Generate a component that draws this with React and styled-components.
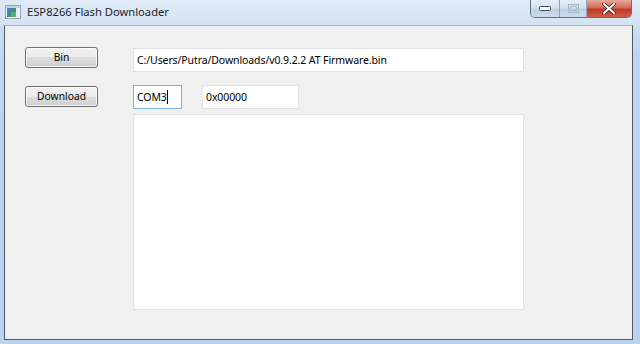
import React from "react";
import styled, { createGlobalStyle } from "styled-components";

const Global = createGlobalStyle`
  html, body { margin: 0; padding: 0; }
  body {
    width: 640px; height: 344px; overflow: hidden;
    font-family: "Noto Sans", "Open Sans", sans-serif;
  }
`;

const Frame = styled.div`
  width: 640px;
  height: 344px;
  box-sizing: border-box;
  display: flex;
  flex-direction: column;
  padding: 0 7px 4px 4px;
  background: linear-gradient(180deg, #dce9f6 0px, #cfe0f2 20px, #bcd6f1 60px, #b9d4f0 100%);
`;

const TitleBar = styled.div`
  height: 25px;
  flex: none;
  display: flex;
  align-items: flex-start;
  margin-left: -4px;
  margin-right: -7px;
  padding-left: 5px;
  background: linear-gradient(180deg, #dfeaf7 0%, #d3e3f4 100%);
`;

const AppIcon = styled.svg`
  width: 16px;
  height: 16px;
  margin-top: 4px;
  flex: none;
`;

const Title = styled.div`
  margin-left: 6px;
  margin-top: 4px;
  font-size: 11.2px;
  color: #1e1e1e;
  flex: 1;
`;

const Controls = styled.div`
  display: flex;
  height: 17px;
  margin-right: 8px;
  border: 1px solid #5f6f84;
  border-top: none;
  border-radius: 0 0 5px 5px;
  overflow: hidden;
`;

const CtlButton = styled.div`
  width: ${(p) => p.$w}px;
  height: 17px;
  display: flex;
  align-items: center;
  justify-content: center;
  box-sizing: border-box;
  border-left: ${(p) => (p.$first ? "none" : "1px solid #8da2bd")};
  background: ${(p) =>
    p.$close
      ? "linear-gradient(180deg, #e9a99b 0%, #d46a57 45%, #c0392b 55%, #cf5b3f 100%)"
      : "linear-gradient(180deg, #e7eef7 0%, #d5e1ee 45%, #bfd0e4 55%, #cbdcee 100%)"};
`;

const Client = styled.div`
  flex: 1;
  background: #f0f0f0;
  border: 1px solid #4e5a68;
  border-top-color: #a4b2c2;
  display: flex;
  padding: 21px 0 0 20px;
  gap: 35px;
  box-sizing: border-box;
`;

const LeftCol = styled.div`
  display: flex;
  flex-direction: column;
  gap: 18px;
  width: 73px;
`;

const Button = styled.div`
  height: 21px;
  box-sizing: border-box;
  border: 1px solid #707070;
  border-radius: 3px;
  background: linear-gradient(180deg, #f2f2f2 0%, #ebebeb 50%, #dddddd 50%, #cfcfcf 100%);
  box-shadow: inset 0 0 0 1px rgba(255, 255, 255, 0.8);
  display: flex;
  align-items: center;
  justify-content: center;
  font-size: 10.3px;
  color: #000;
  padding-bottom: 1px;
`;

const RightCol = styled.div`
  display: flex;
  flex-direction: column;
  width: 391px;
  padding-top: 1px;
`;

const Row = styled.div`
  display: flex;
  gap: 20px;
  margin-top: ${(p) => p.$mt || 0}px;
`;

const Field = styled.div`
  width: ${(p) => p.$w}px;
  height: 24px;
  box-sizing: border-box;
  background: #fff;
  border: 1px solid ${(p) => (p.$focus ? "#7ab4e8" : "#e1e3e6")};
  display: flex;
  align-items: center;
  padding: 0 0 1px 3px;
  font-size: 10.5px;
  letter-spacing: -0.1px;
  color: #000;
  white-space: nowrap;
`;

const Caret = styled.span`
  display: inline-block;
  width: 1px;
  height: 14px;
  background: #000;
`;

const Log = styled.div`
  margin-top: 5px;
  height: 196px;
  box-sizing: border-box;
  background: #fff;
  border: 1px solid #e1e3e6;
`;

export default function App() {
  return (
    <>
      <Global />
      <Frame>
        <TitleBar>
          <AppIcon viewBox="0 0 16 16">
            <rect x="0.5" y="1.5" width="15" height="13" fill="#f4f6f8" stroke="#9aa6b2" />
            <rect x="2" y="4" width="9" height="9" fill="#3f8f7a" />
            <rect x="2" y="4" width="5" height="5" fill="#4a7fc0" />
            <rect x="6" y="8" width="5" height="5" fill="#56b06a" />
            <rect x="11" y="4" width="3" height="9" fill="#e9eef2" />
            <rect x="1" y="2" width="14" height="2" fill="#c9d3dd" />
          </AppIcon>
          <Title>ESP8266 Flash Downloader</Title>
          <Controls>
            <CtlButton $w={28} $first>
              <svg width="12" height="5" viewBox="0 0 12 5">
                <rect x="0.5" y="0.5" width="11" height="4" fill="#fff" stroke="#3b4a5e" rx="1" />
              </svg>
            </CtlButton>
            <CtlButton $w={27}>
              <svg width="11" height="9" viewBox="0 0 11 9">
                <rect x="0.5" y="0.5" width="10" height="8" fill="none" stroke="#a9b9cc" />
                <rect x="2.5" y="2.5" width="6" height="4" fill="none" stroke="#a9b9cc" />
              </svg>
            </CtlButton>
            <CtlButton $w={45} $close>
              <svg width="14" height="11" viewBox="0 0 14 11">
                <path d="M2 1 L12 10 M12 1 L2 10" stroke="#3a2420" strokeWidth="3.6" strokeLinecap="round" />
                <path d="M2 1 L12 10 M12 1 L2 10" stroke="#fff" strokeWidth="2" strokeLinecap="round" />
              </svg>
            </CtlButton>
          </Controls>
        </TitleBar>
        <Client>
          <LeftCol>
            <Button>Bin</Button>
            <Button>Download</Button>
          </LeftCol>
          <RightCol>
            <Field $w={391}>C:/Users/Putra/Downloads/v0.9.2.2 AT Firmware.bin</Field>
            <Row $mt={13}>
              <Field $w={49} $focus>
                COM3<Caret />
              </Field>
              <Field $w={97}>0x00000</Field>
            </Row>
            <Log />
          </RightCol>
        </Client>
      </Frame>
    </>
  );
}
